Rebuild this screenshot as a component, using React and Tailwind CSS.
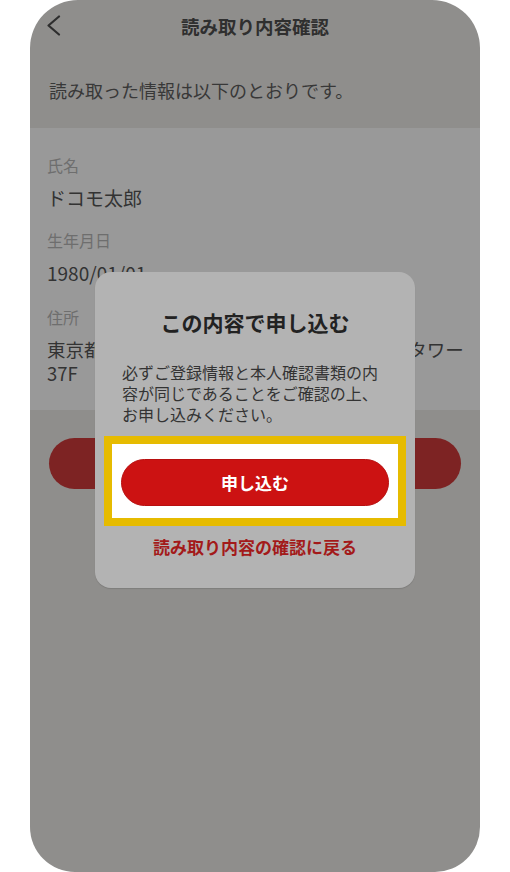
export default function App() {
  const font = { fontFamily: '"Noto Sans CJK JP", "Noto Sans", sans-serif' };
  return (
    <div className="w-[510px] h-[872px] bg-white overflow-hidden" style={font}>
      <div className="relative mx-auto w-[450px] h-[872px] bg-[#8f8e8c] rounded-t-[48px] rounded-b-[45px] overflow-hidden">
        {/* header */}
        <div className="grid grid-cols-[44px_1fr_44px] items-center h-[52px]">
          <div className="flex items-center pl-[16px]">
            <svg width="16" height="22" viewBox="0 0 16 22" fill="none">
              <polyline points="13,1.5 2.5,10.5 13,19.5" stroke="#2e2e2e" strokeWidth="2.2" strokeLinecap="round" strokeLinejoin="round" />
            </svg>
          </div>
          <div className="text-center text-[18.5px] font-bold text-[#2f2f2f] leading-[24px]">読み取り内容確認</div>
          <div />
        </div>
        {/* intro */}
        <div className="h-[76px] flex items-center pl-[19px] text-[18px] text-[#383838]">
          読み取った情報は以下のとおりです。
        </div>
        {/* info section */}
        <div className="bg-[#999999] pl-[17px] pt-[26px] pb-[25px]">
          <div className="text-[16px] leading-[22px] text-[#6e6e6e]">氏名</div>
          <div className="mt-[10px] text-[19px] leading-[24px] text-[#333]">ドコモ太郎</div>
          <div className="mt-[19px] text-[16px] leading-[22px] text-[#6e6e6e]">生年月日</div>
          <div className="mt-[10px] text-[19px] leading-[24px] text-[#333]">1980/01/01</div>
          <div className="mt-[21px] text-[16px] leading-[22px] text-[#6e6e6e]">住所</div>
          <div className="mt-[9px] text-[18.5px] leading-[24px] text-[#333] whitespace-nowrap">
            東京都千代田区永田町2丁目11-1山王パークタワー
            <br />
            37F
          </div>
        </div>
        {/* underlying button */}
        <div className="mt-[28px] mx-[19px] h-[51px] rounded-full bg-[#7d2323]" />

        {/* modal */}
        <div className="absolute left-[65px] top-[272px] w-[320px] h-[316px] rounded-[16px] bg-[#b3b3b3] shadow-[0_1px_1px_rgba(0,0,0,0.12)] flex flex-col">
          <div className="pt-[36px] text-center text-[21px] leading-[28px] font-bold text-[#222]">この内容で申し込む</div>
          <div className="mt-[26px] px-[27px] text-[16px] leading-[21px] text-[#333]">
            必ずご登録情報と本人確認書類の内容が同じであることをご確認の上、お申し込みください。
          </div>
          <div className="mt-[11px] mx-[9px] border-[8px] border-[#e6bb00] bg-white px-[9px] pt-[15px] pb-[12px]">
            <div className="h-[47px] rounded-full bg-[#cc1212] border border-[#b80f0f] flex items-center justify-center text-white text-[17px] font-bold">
              申し込む
            </div>
          </div>
          <div className="mt-[9px] text-center text-[17px] leading-[24px] font-bold text-[#a31a1a]">読み取り内容の確認に戻る</div>
        </div>
      </div>
    </div>
  );
}
